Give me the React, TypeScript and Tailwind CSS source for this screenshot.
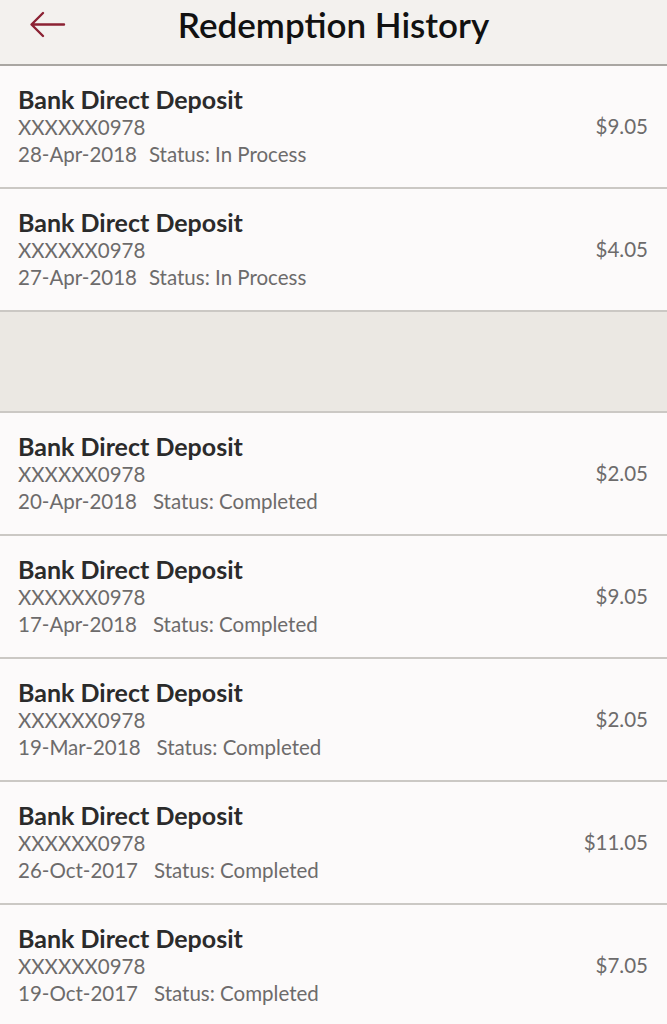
import React from 'react';

interface Redemption {
  date: string;
  status: string;
  amount: string;
  gap: string;
}

const pending: Redemption[] = [
  { date: '28-Apr-2018', status: 'In Process', amount: '$9.05', gap: 'ml-3' },
  { date: '27-Apr-2018', status: 'In Process', amount: '$4.05', gap: 'ml-3' },
];

const done: Redemption[] = [
  { date: '20-Apr-2018', status: 'Completed', amount: '$2.05', gap: 'ml-4' },
  { date: '17-Apr-2018', status: 'Completed', amount: '$9.05', gap: 'ml-4' },
  { date: '19-Mar-2018', status: 'Completed', amount: '$2.05', gap: 'ml-4' },
  { date: '26-Oct-2017', status: 'Completed', amount: '$11.05', gap: 'ml-4' },
  { date: '19-Oct-2017', status: 'Completed', amount: '$7.05', gap: 'ml-4' },
];

function Row({ item }: { item: Redemption }) {
  return (
    <div className="flex items-center justify-between border-b-2 border-[#cbc8c4] bg-[#fcfafa] pl-[18px] pr-[19px] pt-[18px] pb-[19px]">
      <div>
        <div className="text-[25px] font-bold leading-[30px] text-[#2b2b2b]">Bank Direct Deposit</div>
        <div className="text-[20.5px] leading-[27px] text-[#6d6b6b]">XXXXXX0978</div>
        <div className="text-[20.5px] leading-[27px] text-[#6d6b6b]">
          {item.date}
          <span className={item.gap}>Status: {item.status}</span>
        </div>
      </div>
      <div className="text-[20.5px] text-[#6d6b6b]">{item.amount}</div>
    </div>
  );
}

export default function App() {
  return (
    <div className="min-h-[1024px] bg-[#fcfafa]" style={{ fontFamily: 'Lato, "Open Sans", sans-serif' }}>
      <div className="relative flex h-[66px] justify-center border-b-2 border-[#a9a6a2] bg-[#f3f1ee] pt-[3px]">
        <button className="absolute left-[28px] top-[9px] text-[#8c2233]">
          <svg width="40" height="32" viewBox="0 0 40 32" fill="none" stroke="currentColor" strokeWidth="2.4" strokeLinecap="round" strokeLinejoin="round">
            <path d="M36 15.5H4M15 4L3.5 15.5L15 27" />
          </svg>
        </button>
        <h1 className="text-[35px] font-semibold leading-[42px] text-[#111]">Redemption History</h1>
      </div>
      {pending.map((r, i) => (
        <Row key={i} item={r} />
      ))}
      <div className="h-[101px] border-b-2 border-[#cbc8c4] bg-[#ebe8e3]" />
      {done.map((r, i) => (
        <Row key={i} item={r} />
      ))}
    </div>
  );
}
